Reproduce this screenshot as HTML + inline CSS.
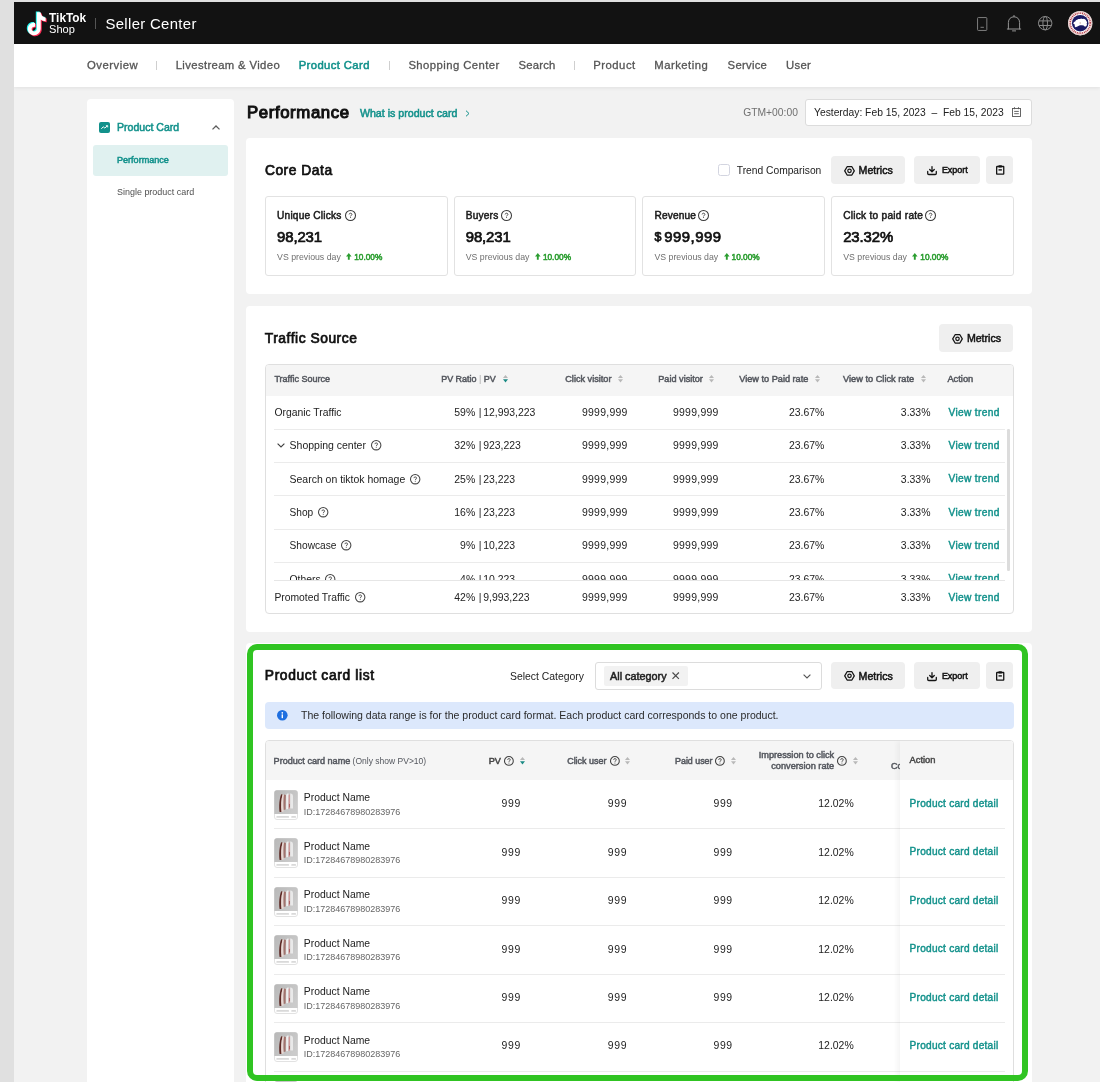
<!DOCTYPE html>
<html lang="en"><head><meta charset="utf-8"><title>TikTok Shop Seller Center - Product Card Performance</title>
<style>
*{box-sizing:border-box;margin:0;padding:0}
html,body{width:1100px;height:1082px;overflow:hidden}
body{background:#e0e0e0;font-family:"Liberation Sans",Arial,sans-serif;color:#1f1f1f;font-size:10.4px;position:relative}
.abs,.t{position:absolute}
.t{white-space:nowrap;line-height:14px;height:14px}
.t2{line-height:20px;height:20px}
.t3{line-height:24px;height:24px}
.b{font-weight:700}
.sb{-webkit-text-stroke:0.5px currentColor}
.sbl{-webkit-text-stroke:0.42px currentColor}
.sb1{-webkit-text-stroke:0.5px currentColor}
.sb2{-webkit-text-stroke:0.72px currentColor}
.sb3{-webkit-text-stroke:1.05px currentColor}
.teal{color:#12918b}
.gray{color:#707070}
svg{position:absolute;overflow:visible}
#app{opacity:0.999;position:absolute;left:14px;top:2px;width:1086px;height:1080px;background:#f2f2f2;overflow:hidden}
header{position:absolute;left:0;top:0;width:1086px;height:42px;background:#121212}
nav{position:absolute;left:0;top:42px;width:1086px;height:43.3px;background:#fff;box-shadow:0 1px 4px rgba(0,0,0,.08)}
nav .t{font-size:12px;color:#555;-webkit-text-stroke:0.3px currentColor}
nav .t.sb{-webkit-text-stroke:0.5px currentColor}
nav .t.teal{color:#12918b}
nav .sep{position:absolute;top:16.5px;width:1px;height:9px;background:#cfcfcf}
aside{position:absolute;left:73px;top:97px;width:147px;height:1000px;background:#fff;border-radius:4px}
.card{position:absolute;left:232.2px;width:785.6px;background:#fff;border-radius:4px}
.btn{position:absolute;background:#efefef;border-radius:4px;height:27.4px}
.stat{position:absolute;border:1px solid #e2e2e2;border-radius:3px;background:#fff}
.tbl{position:absolute;border:1px solid #dfdfdf;border-radius:4px;overflow:hidden;background:#fff}
.thead{position:absolute;left:0;top:0;right:0;background:#f5f5f5}
.thead .t{color:#55585f}
.hl{position:absolute;height:1px;background:#ebebeb}
</style></head>
<body>
<div id="app">
<header>
<svg style="left:11.60px;top:8.80px" width="21.5" height="25.5" viewBox="-1.6 -1.2 20.2 24.4"><path d="M8.6 0 H12.2 C12.5 2.9 14.2 4.7 17 5 V8.6 C15.2 8.6 13.6 8 12.3 7 V15.4 C12.3 19.4 9.3 22 6 22 C2.6 22 0 19.3 0 16 C0 12.4 3.1 9.6 6.9 10.2 V13.9 C5.1 13.4 3.6 14.5 3.6 16.1 C3.6 17.5 4.7 18.5 6 18.5 C7.5 18.5 8.6 17.4 8.6 15.6 Z" fill="#25f4ee" transform="translate(-1,-0.8)"/><path d="M8.6 0 H12.2 C12.5 2.9 14.2 4.7 17 5 V8.6 C15.2 8.6 13.6 8 12.3 7 V15.4 C12.3 19.4 9.3 22 6 22 C2.6 22 0 19.3 0 16 C0 12.4 3.1 9.6 6.9 10.2 V13.9 C5.1 13.4 3.6 14.5 3.6 16.1 C3.6 17.5 4.7 18.5 6 18.5 C7.5 18.5 8.6 17.4 8.6 15.6 Z" fill="#fe2c55" transform="translate(1,0.9)"/><path d="M8.6 0 H12.2 C12.5 2.9 14.2 4.7 17 5 V8.6 C15.2 8.6 13.6 8 12.3 7 V15.4 C12.3 19.4 9.3 22 6 22 C2.6 22 0 19.3 0 16 C0 12.4 3.1 9.6 6.9 10.2 V13.9 C5.1 13.4 3.6 14.5 3.6 16.1 C3.6 17.5 4.7 18.5 6 18.5 C7.5 18.5 8.6 17.4 8.6 15.6 Z" fill="#fff"/></svg>
<span class="t b" style="left:35.10px;top:7.00px;line-height:18px;height:18px;font-size:11.85px;color:#fff">TikTok</span>
<span class="t " style="left:35.10px;top:19.00px;line-height:16px;height:16px;font-size:11.05px;color:#fff">Shop</span>
<div class="abs" style="left:81.00px;top:16.00px;width:1.00px;height:10.50px;background:#555"></div>
<span class="t " style="left:91.50px;top:12.00px;line-height:20px;height:20px;font-size:14.90px;letter-spacing:0.329px;color:#fff">Seller Center</span>
<svg style="left:962.80px;top:14.80px" width="10.4" height="14" viewBox="0 0 10.4 14"><rect x="0.55" y="0.55" width="9.3" height="12.9" rx="0.8" fill="none" stroke="#7d7d7d" stroke-width="1"/><path d="M3.5 10.3 H6.9" stroke="#7d7d7d" stroke-width="1"/></svg>
<svg style="left:992.50px;top:12.50px" width="14" height="17" viewBox="0 0 14 17"><path d="M7 0.4 V1.7 M1.4 14 V7.6 C1.4 3.8 4 1.8 7 1.8 C10 1.8 12.6 3.8 12.6 7.6 V14 M0.3 14 H13.7 M5.5 15.9 H8.6" fill="none" stroke="#939393" stroke-width="1" stroke-linecap="round"/></svg>
<svg style="left:1024.20px;top:13.80px" width="14.4" height="14.4" viewBox="0 0 14.4 14.4"><g fill="none" stroke="#8a8a8a" stroke-width="1"><circle cx="7.2" cy="7.2" r="6.7"/><ellipse cx="7.2" cy="7.2" rx="2.3" ry="6.7"/><path d="M1 4.9 H13.4 M1 9.5 H13.4"/></g></svg>
<svg style="left:1053.90px;top:8.90px" width="24.4" height="24.4" viewBox="0 0 24.4 24.4"><circle cx="12.2" cy="12.2" r="12.2" fill="#fff"/><circle cx="12.2" cy="12.2" r="11.6" fill="none" stroke="#d8a9a6" stroke-width="0.7"/><circle cx="12.2" cy="12.2" r="10" fill="none" stroke="#b8434c" stroke-width="1.7" stroke-dasharray="1.1 0.7"/><circle cx="12.2" cy="12.2" r="8.3" fill="#1a1a63"/><path d="M5.2 12.6 L6 10.9 L7.2 10.6 L7.9 9.2 L9.6 8.6 L10.4 7.9 L12.3 8 L13 7.6 L14.8 8 L16 7.8 L17.6 8.8 L18.4 10 L19.1 11.2 L18.7 12.6 L19 14 L17.9 15.4 L16.6 15.6 L15.6 14.6 L14 14.2 L12 14.3 L10.3 15 L9 15.8 L7.3 16.2 L6.6 15 L6.9 13.8 Z" fill="#fff"/><circle cx="12.2" cy="12" r="0.7" fill="#c9a7a0"/></svg>
</header>
<nav>
<span class="t " style="left:72.90px;top:13.00px;line-height:16px;height:16px;font-size:11.30px;letter-spacing:0.530px;">Overview</span>
<span class="t " style="left:161.70px;top:13.00px;line-height:16px;height:16px;font-size:11.30px;letter-spacing:0.366px;">Livestream &amp; Video</span>
<span class="t sb teal" style="left:284.70px;top:13.00px;line-height:16px;height:16px;font-size:11.30px;letter-spacing:0.384px;">Product Card</span>
<span class="t " style="left:394.40px;top:13.00px;line-height:16px;height:16px;font-size:11.30px;letter-spacing:0.435px;">Shopping Center</span>
<span class="t " style="left:504.40px;top:13.00px;line-height:16px;height:16px;font-size:11.30px;letter-spacing:0.239px;">Search</span>
<span class="t " style="left:579.20px;top:13.00px;line-height:16px;height:16px;font-size:11.30px;letter-spacing:0.509px;">Product</span>
<span class="t " style="left:640.30px;top:13.00px;line-height:16px;height:16px;font-size:11.30px;letter-spacing:0.486px;">Marketing</span>
<span class="t " style="left:713.60px;top:13.00px;line-height:16px;height:16px;font-size:11.30px;letter-spacing:0.270px;">Service</span>
<span class="t " style="left:772.00px;top:13.00px;line-height:16px;height:16px;font-size:11.30px;letter-spacing:0.314px;">User</span>
<div class="abs" style="left:141.80px;top:16.50px;width:1.00px;height:9.50px;background:#cfcfcf"></div>
<div class="abs" style="left:374.70px;top:16.50px;width:1.00px;height:9.50px;background:#cfcfcf"></div>
<div class="abs" style="left:560.00px;top:16.50px;width:1.00px;height:9.50px;background:#cfcfcf"></div>
</nav>
<aside>
<svg style="left:12.30px;top:22.90px" width="11" height="11" viewBox="0 0 11 11"><rect width="11" height="11" rx="2" fill="#12918b"/><path d="M2.3 6.7 L4.3 4.9 L5.8 6 L8.4 3.9" fill="none" stroke="#fff" stroke-width="1"/><path d="M6.9 3.7 H8.7 V5.4" fill="none" stroke="#fff" stroke-width="0.9"/></svg>
<span class="t sb teal" style="left:30.00px;top:20.00px;line-height:16px;height:16px;font-size:10.57px;">Product Card</span>
<svg style="left:125.30px;top:25.80px" width="8" height="5" viewBox="0 0 8 5"><path d="M0.5 4.4 L4 1 L7.5 4.4" fill="none" stroke="#5c5c5c" stroke-width="1.3"/></svg>
<div class="abs" style="left:5.80px;top:45.50px;width:135.30px;height:31.20px;background:#e0f1f0;border-radius:3px"></div>
<span class="t sb1 teal" style="left:30.00px;top:54.00px;line-height:14px;height:14px;font-size:9.07px;">Performance</span>
<span class="t " style="left:30.00px;top:86.00px;line-height:14px;height:14px;font-size:8.96px;color:#505050">Single product card</span>
</aside>
<span class="t sb3" style="left:233.00px;top:99.00px;line-height:23px;height:23px;font-size:16.80px;letter-spacing:0.603px;color:#111">Performance</span>
<span class="t sb teal" style="left:345.90px;top:103.00px;line-height:16px;height:16px;font-size:10.65px;">What is product card</span>
<svg style="left:450.50px;top:107.70px" width="5" height="7" viewBox="0 0 5 7"><path d="M1 0.7 L4 3.5 L1 6.3" fill="none" stroke="#12918b" stroke-width="1"/></svg>
<span class="t gray" style="left:729.20px;top:103.00px;line-height:15px;height:15px;font-size:10.32px;">GTM+00:00</span>
<div class="abs" style="left:790.70px;top:97.30px;width:227.00px;height:26.50px;background:#fff;border:1px solid #dcdcdc;border-radius:3px"><span class="t " style="left:8.30px;top:4.70px;line-height:15px;height:15px;font-size:10.31px;color:#222">Yesterday: Feb 15, 2023&nbsp; –&nbsp; Feb 15, 2023</span><svg style="left:206.40px;top:6.90px" width="9.3" height="10" viewBox="0 0 9.3 10"><g fill="none" stroke="#555" stroke-width="0.9"><rect x="0.5" y="1.5" width="8" height="8"/><path d="M2.5 0.2 V2.2 M6.5 0.2 V2.2 M2.2 4.4 H6.8 M2.2 6.7 H6.8"/></g></svg></div>
<section class="card" style="top:136.4px;height:156.1px">
<span class="t sb2" style="left:18.70px;top:22.60px;line-height:19px;height:19px;font-size:13.80px;letter-spacing:0.538px;color:#111">Core Data</span>
<div class="abs" style="left:472.00px;top:25.60px;width:12.00px;height:11.80px;border:1px solid #d3d5e0;border-radius:2.5px;background:#fff"></div>
<span class="t " style="left:490.60px;top:24.60px;line-height:15px;height:15px;font-size:10.25px;color:#222">Trend Comparison</span>
<div class="btn" style="left:584.70px;top:17.90px;width:74.30px;height:27.40px;"><svg style="left:13.10px;top:9.25px" width="11" height="10" viewBox="0 0 11 10"><path d="M3.1 0.7 L7.9 0.7 L10.3 4.85 L7.9 9 L3.1 9 L0.7 4.85 Z" fill="none" stroke="#141414" stroke-width="1.25" stroke-linejoin="round"/><circle cx="5.5" cy="4.85" r="1.75" fill="none" stroke="#141414" stroke-width="1.2"/></svg><span class="t sb" style="left:27.70px;top:5.70px;line-height:16px;height:16px;font-size:10.61px;color:#141414">Metrics</span></div><div class="btn" style="left:668.00px;top:17.90px;width:65.90px;height:27.40px;"><svg style="left:13.20px;top:9.60px" width="10" height="9.2" viewBox="0 0 10 9.2"><path d="M5 0.6 V5.6 M2.7 3.5 L5 5.8 L7.3 3.5 M0.7 5.4 V7.4 Q0.7 8.5 1.8 8.5 H8.2 Q9.3 8.5 9.3 7.4 V5.4" fill="none" stroke="#141414" stroke-width="1.3" stroke-linecap="round" stroke-linejoin="round"/></svg><span class="t sb" style="left:27.70px;top:6.70px;line-height:14px;height:14px;font-size:8.96px;color:#141414">Export</span></div><div class="btn" style="left:739.90px;top:17.90px;width:27.40px;height:27.40px;"><svg style="left:9.70px;top:8.90px" width="8.4" height="9.8" viewBox="0 0 8.4 9.8"><rect x="0.65" y="1.5" width="7.1" height="7.65" rx="0.3" fill="none" stroke="#141414" stroke-width="1.3"/><rect x="2.4" y="0.2" width="3.6" height="2.2" rx="0.6" fill="#141414"/><path d="M2.5 4.9 H5.9" stroke="#141414" stroke-width="1.4"/></svg></div>
<div class="stat" style="left:18.70px;top:57.70px;width:182.70px;height:79.80px;">
<span class="t sb" style="left:11.20px;top:10.90px;line-height:15px;height:15px;font-size:10.15px;letter-spacing:0.196px;color:#1a1a1a">Unique Clicks</span>
<svg style="left:78.70px;top:12.90px" width="11.0" height="11.0" viewBox="-5.5 -5.5 11.0 11.0"><circle cx="0" cy="0" r="5.0" fill="none" stroke="#3c3c3c" stroke-width="1.05"/><path d="M-1.3 -1.1 C-1.3 -2.7 1.4 -2.7 1.4 -1.1 C1.4 -0.1 0.05 -0.2 0.05 0.9" fill="none" stroke="#3c3c3c" stroke-width="0.9"/><circle cx="0.05" cy="2.1" r="0.5" fill="#3c3c3c"/></svg>
<span class="t sb2" style="left:11.20px;top:29.90px;line-height:20px;height:20px;font-size:14.90px;letter-spacing:-0.115px;color:#111">98,231</span>
<span class="t gray" style="left:11.20px;top:52.90px;line-height:14px;height:14px;font-size:8.76px;">VS previous day</span>
<svg style="left:80.50px;top:56.30px" width="5.6" height="6.8" viewBox="0 0 5.6 6.8"><path d="M2.8 0 L5.6 3.6 H3.75 V6.8 H1.85 V3.6 H0 Z" fill="#2a9d2f"/></svg>
<span class="t sb1" style="left:88.30px;top:52.90px;line-height:14px;height:14px;font-size:8.31px;color:#2a9d2f">10.00%</span>
</div>
<div class="stat" style="left:207.40px;top:57.70px;width:182.70px;height:79.80px;">
<span class="t sb" style="left:11.20px;top:10.90px;line-height:15px;height:15px;font-size:10.15px;letter-spacing:0.182px;color:#1a1a1a">Buyers</span>
<svg style="left:46.40px;top:12.90px" width="11.0" height="11.0" viewBox="-5.5 -5.5 11.0 11.0"><circle cx="0" cy="0" r="5.0" fill="none" stroke="#3c3c3c" stroke-width="1.05"/><path d="M-1.3 -1.1 C-1.3 -2.7 1.4 -2.7 1.4 -1.1 C1.4 -0.1 0.05 -0.2 0.05 0.9" fill="none" stroke="#3c3c3c" stroke-width="0.9"/><circle cx="0.05" cy="2.1" r="0.5" fill="#3c3c3c"/></svg>
<span class="t sb2" style="left:11.20px;top:29.90px;line-height:20px;height:20px;font-size:14.90px;letter-spacing:-0.115px;color:#111">98,231</span>
<span class="t gray" style="left:11.20px;top:52.90px;line-height:14px;height:14px;font-size:8.76px;">VS previous day</span>
<svg style="left:80.50px;top:56.30px" width="5.6" height="6.8" viewBox="0 0 5.6 6.8"><path d="M2.8 0 L5.6 3.6 H3.75 V6.8 H1.85 V3.6 H0 Z" fill="#2a9d2f"/></svg>
<span class="t sb1" style="left:88.30px;top:52.90px;line-height:14px;height:14px;font-size:8.31px;color:#2a9d2f">10.00%</span>
</div>
<div class="stat" style="left:396.10px;top:57.70px;width:182.70px;height:79.80px;">
<span class="t sb" style="left:11.20px;top:10.90px;line-height:15px;height:15px;font-size:10.15px;letter-spacing:0.145px;color:#1a1a1a">Revenue</span>
<svg style="left:55.20px;top:12.90px" width="11.0" height="11.0" viewBox="-5.5 -5.5 11.0 11.0"><circle cx="0" cy="0" r="5.0" fill="none" stroke="#3c3c3c" stroke-width="1.05"/><path d="M-1.3 -1.1 C-1.3 -2.7 1.4 -2.7 1.4 -1.1 C1.4 -0.1 0.05 -0.2 0.05 0.9" fill="none" stroke="#3c3c3c" stroke-width="0.9"/><circle cx="0.05" cy="2.1" r="0.5" fill="#3c3c3c"/></svg>
<span class="t sb2" style="left:11.20px;top:30.90px;line-height:18px;height:18px;font-size:12.50px;color:#111">$</span>
<span class="t sb2" style="left:20.90px;top:29.90px;line-height:20px;height:20px;font-size:14.90px;letter-spacing:0.523px;color:#111">999,999</span>
<span class="t gray" style="left:11.20px;top:52.90px;line-height:14px;height:14px;font-size:8.76px;">VS previous day</span>
<svg style="left:80.50px;top:56.30px" width="5.6" height="6.8" viewBox="0 0 5.6 6.8"><path d="M2.8 0 L5.6 3.6 H3.75 V6.8 H1.85 V3.6 H0 Z" fill="#2a9d2f"/></svg>
<span class="t sb1" style="left:88.30px;top:52.90px;line-height:14px;height:14px;font-size:8.31px;color:#2a9d2f">10.00%</span>
</div>
<div class="stat" style="left:584.80px;top:57.70px;width:182.70px;height:79.80px;">
<span class="t sb" style="left:11.20px;top:10.90px;line-height:15px;height:15px;font-size:10.15px;letter-spacing:0.259px;color:#1a1a1a">Click to paid rate</span>
<svg style="left:93.00px;top:12.90px" width="11.0" height="11.0" viewBox="-5.5 -5.5 11.0 11.0"><circle cx="0" cy="0" r="5.0" fill="none" stroke="#3c3c3c" stroke-width="1.05"/><path d="M-1.3 -1.1 C-1.3 -2.7 1.4 -2.7 1.4 -1.1 C1.4 -0.1 0.05 -0.2 0.05 0.9" fill="none" stroke="#3c3c3c" stroke-width="0.9"/><circle cx="0.05" cy="2.1" r="0.5" fill="#3c3c3c"/></svg>
<span class="t sb2" style="left:11.20px;top:29.90px;line-height:20px;height:20px;font-size:14.90px;letter-spacing:-0.107px;color:#111">23.32%</span>
<span class="t gray" style="left:11.20px;top:52.90px;line-height:14px;height:14px;font-size:8.76px;">VS previous day</span>
<svg style="left:80.50px;top:56.30px" width="5.6" height="6.8" viewBox="0 0 5.6 6.8"><path d="M2.8 0 L5.6 3.6 H3.75 V6.8 H1.85 V3.6 H0 Z" fill="#2a9d2f"/></svg>
<span class="t sb1" style="left:88.30px;top:52.90px;line-height:14px;height:14px;font-size:8.31px;color:#2a9d2f">10.00%</span>
</div>
</section>
<section class="card" style="top:304px;height:325.8px">
<span class="t sb2" style="left:18.60px;top:23.00px;line-height:19px;height:19px;font-size:13.80px;letter-spacing:0.536px;color:#111">Traffic Source</span>
<div class="btn" style="left:693.00px;top:18.40px;width:74.30px;height:27.40px;"><svg style="left:13.10px;top:9.25px" width="11" height="10" viewBox="0 0 11 10"><path d="M3.1 0.7 L7.9 0.7 L10.3 4.85 L7.9 9 L3.1 9 L0.7 4.85 Z" fill="none" stroke="#141414" stroke-width="1.25" stroke-linejoin="round"/><circle cx="5.5" cy="4.85" r="1.75" fill="none" stroke="#141414" stroke-width="1.2"/></svg><span class="t sb" style="left:27.70px;top:5.60px;line-height:16px;height:16px;font-size:10.61px;color:#141414">Metrics</span></div>
<div class="tbl" style="left:18.60px;top:58.10px;width:749.40px;height:249.90px;">
<div class="thead" style="left:0.00px;top:0.00px;width:747.40px;height:30.60px;">
<span class="t sb1" style="left:8.60px;top:6.90px;line-height:14px;height:14px;font-size:9.03px;">Traffic Source</span>
<span class="t sb1" style="left:175.40px;top:6.90px;line-height:14px;height:14px;font-size:8.96px;">PV Ratio <span style="color:#aaa;-webkit-text-stroke:0">|</span> PV</span>
<svg style="left:237.20px;top:10.40px" width="5" height="7.4" viewBox="0 0 5 7.4"><path d="M2.5 0 L5 3.1 L0 3.1 Z" fill="#b8b8b8"/><path d="M2.5 7.4 L5 4.3 L0 4.3 Z" fill="#1a8a84"/></svg>
<span class="t sb1" style="left:299.50px;top:6.90px;line-height:14px;height:14px;font-size:9.14px;">Click visitor</span>
<svg style="left:352.70px;top:10.40px" width="5" height="7.4" viewBox="0 0 5 7.4"><path d="M2.5 0 L5 3.1 L0 3.1 Z" fill="#b8b8b8"/><path d="M2.5 7.4 L5 4.3 L0 4.3 Z" fill="#b8b8b8"/></svg>
<span class="t sb1" style="left:392.50px;top:6.90px;line-height:14px;height:14px;font-size:9.14px;">Paid visitor</span>
<svg style="left:443.50px;top:10.40px" width="5" height="7.4" viewBox="0 0 5 7.4"><path d="M2.5 0 L5 3.1 L0 3.1 Z" fill="#b8b8b8"/><path d="M2.5 7.4 L5 4.3 L0 4.3 Z" fill="#b8b8b8"/></svg>
<span class="t sb1" style="left:473.50px;top:6.90px;line-height:14px;height:14px;font-size:9.16px;">View to Paid rate</span>
<svg style="left:549.70px;top:10.40px" width="5" height="7.4" viewBox="0 0 5 7.4"><path d="M2.5 0 L5 3.1 L0 3.1 Z" fill="#b8b8b8"/><path d="M2.5 7.4 L5 4.3 L0 4.3 Z" fill="#b8b8b8"/></svg>
<span class="t sb1" style="left:577.30px;top:6.90px;line-height:14px;height:14px;font-size:9.23px;">View to Click rate</span>
<svg style="left:655.40px;top:10.40px" width="5" height="7.4" viewBox="0 0 5 7.4"><path d="M2.5 0 L5 3.1 L0 3.1 Z" fill="#b8b8b8"/><path d="M2.5 7.4 L5 4.3 L0 4.3 Z" fill="#b8b8b8"/></svg>
<span class="t sb1" style="left:681.60px;top:6.90px;line-height:14px;height:14px;font-size:9.32px;">Action</span>
</div>
<div class="abs" style="left:0.00px;top:30.60px;width:747.40px;height:184.90px;overflow:hidden">
<span class="t " style="left:8.60px;top:9.30px;line-height:15px;height:15px;font-size:10.36px;color:#222">Organic Traffic</span><span class="t " style="left:-90.60px;width:300px;text-align:right;top:9.30px;line-height:15px;height:15px;font-size:10.45px;color:#222">59%</span><span class="t " style="left:212.90px;top:9.30px;line-height:15px;height:15px;font-size:10.45px;color:#222">|</span><span class="t " style="left:217.40px;top:9.30px;line-height:15px;height:15px;font-size:10.45px;color:#222">12,993,223</span><span class="t " style="left:61.87px;width:300px;text-align:right;top:9.30px;line-height:15px;height:15px;font-size:10.45px;letter-spacing:0.273px;color:#222">9999,999</span><span class="t " style="left:152.87px;width:300px;text-align:right;top:9.30px;line-height:15px;height:15px;font-size:10.45px;letter-spacing:0.273px;color:#222">9999,999</span><span class="t " style="left:258.60px;width:300px;text-align:right;top:9.30px;line-height:15px;height:15px;font-size:10.45px;color:#222">23.67%</span><span class="t " style="left:364.70px;width:300px;text-align:right;top:9.30px;line-height:15px;height:15px;font-size:10.45px;color:#222">3.33%</span><span class="t sbl teal" style="left:682.70px;top:9.30px;line-height:15px;height:15px;font-size:10.20px;letter-spacing:0.333px;">View trend</span>
<div class="hl" style="left:7.80px;top:32.83px;width:731.00px;height:1.00px;"></div>
<svg style="left:11.20px;top:47.63px" width="8" height="5" viewBox="0 0 8 5"><path d="M0.6 0.7 L4 4 L7.4 0.7" fill="none" stroke="#444" stroke-width="1.15"/></svg><span class="t " style="left:23.80px;top:42.30px;line-height:15px;height:15px;font-size:10.49px;color:#222">Shopping center</span><svg style="left:105.10px;top:44.73px" width="10.4" height="10.4" viewBox="-5.2 -5.2 10.4 10.4"><circle cx="0" cy="0" r="4.7" fill="none" stroke="#444" stroke-width="1.05"/><path d="M-1.3 -1.1 C-1.3 -2.7 1.4 -2.7 1.4 -1.1 C1.4 -0.1 0.05 -0.2 0.05 0.9" fill="none" stroke="#444" stroke-width="0.9"/><circle cx="0.05" cy="2.1" r="0.5" fill="#444"/></svg><span class="t " style="left:-90.60px;width:300px;text-align:right;top:42.30px;line-height:15px;height:15px;font-size:10.45px;color:#222">32%</span><span class="t " style="left:212.90px;top:42.30px;line-height:15px;height:15px;font-size:10.45px;color:#222">|</span><span class="t " style="left:217.40px;top:42.30px;line-height:15px;height:15px;font-size:10.45px;color:#222">923,223</span><span class="t " style="left:61.87px;width:300px;text-align:right;top:42.30px;line-height:15px;height:15px;font-size:10.45px;letter-spacing:0.273px;color:#222">9999,999</span><span class="t " style="left:152.87px;width:300px;text-align:right;top:42.30px;line-height:15px;height:15px;font-size:10.45px;letter-spacing:0.273px;color:#222">9999,999</span><span class="t " style="left:258.60px;width:300px;text-align:right;top:42.30px;line-height:15px;height:15px;font-size:10.45px;color:#222">23.67%</span><span class="t " style="left:364.70px;width:300px;text-align:right;top:42.30px;line-height:15px;height:15px;font-size:10.45px;color:#222">3.33%</span><span class="t sbl teal" style="left:682.70px;top:42.30px;line-height:15px;height:15px;font-size:10.20px;letter-spacing:0.333px;">View trend</span>
<div class="hl" style="left:7.80px;top:66.16px;width:731.00px;height:1.00px;"></div>
<span class="t " style="left:23.80px;top:76.30px;line-height:15px;height:15px;font-size:10.46px;color:#222">Search on tiktok homage</span><svg style="left:144.00px;top:78.06px" width="10.4" height="10.4" viewBox="-5.2 -5.2 10.4 10.4"><circle cx="0" cy="0" r="4.7" fill="none" stroke="#444" stroke-width="1.05"/><path d="M-1.3 -1.1 C-1.3 -2.7 1.4 -2.7 1.4 -1.1 C1.4 -0.1 0.05 -0.2 0.05 0.9" fill="none" stroke="#444" stroke-width="0.9"/><circle cx="0.05" cy="2.1" r="0.5" fill="#444"/></svg><span class="t " style="left:-90.60px;width:300px;text-align:right;top:76.30px;line-height:15px;height:15px;font-size:10.45px;color:#222">25%</span><span class="t " style="left:212.90px;top:76.30px;line-height:15px;height:15px;font-size:10.45px;color:#222">|</span><span class="t " style="left:217.40px;top:76.30px;line-height:15px;height:15px;font-size:10.45px;color:#222">23,223</span><span class="t " style="left:61.87px;width:300px;text-align:right;top:76.30px;line-height:15px;height:15px;font-size:10.45px;letter-spacing:0.273px;color:#222">9999,999</span><span class="t " style="left:152.87px;width:300px;text-align:right;top:76.30px;line-height:15px;height:15px;font-size:10.45px;letter-spacing:0.273px;color:#222">9999,999</span><span class="t " style="left:258.60px;width:300px;text-align:right;top:76.30px;line-height:15px;height:15px;font-size:10.45px;color:#222">23.67%</span><span class="t " style="left:364.70px;width:300px;text-align:right;top:76.30px;line-height:15px;height:15px;font-size:10.45px;color:#222">3.33%</span><span class="t sbl teal" style="left:682.70px;top:75.30px;line-height:15px;height:15px;font-size:10.20px;letter-spacing:0.333px;">View trend</span>
<div class="hl" style="left:7.80px;top:99.49px;width:731.00px;height:1.00px;"></div>
<span class="t " style="left:23.80px;top:109.30px;line-height:15px;height:15px;font-size:10.15px;color:#222">Shop</span><svg style="left:52.00px;top:111.39px" width="10.4" height="10.4" viewBox="-5.2 -5.2 10.4 10.4"><circle cx="0" cy="0" r="4.7" fill="none" stroke="#444" stroke-width="1.05"/><path d="M-1.3 -1.1 C-1.3 -2.7 1.4 -2.7 1.4 -1.1 C1.4 -0.1 0.05 -0.2 0.05 0.9" fill="none" stroke="#444" stroke-width="0.9"/><circle cx="0.05" cy="2.1" r="0.5" fill="#444"/></svg><span class="t " style="left:-90.60px;width:300px;text-align:right;top:109.30px;line-height:15px;height:15px;font-size:10.45px;color:#222">16%</span><span class="t " style="left:212.90px;top:109.30px;line-height:15px;height:15px;font-size:10.45px;color:#222">|</span><span class="t " style="left:217.40px;top:109.30px;line-height:15px;height:15px;font-size:10.45px;color:#222">23,223</span><span class="t " style="left:61.87px;width:300px;text-align:right;top:109.30px;line-height:15px;height:15px;font-size:10.45px;letter-spacing:0.273px;color:#222">9999,999</span><span class="t " style="left:152.87px;width:300px;text-align:right;top:109.30px;line-height:15px;height:15px;font-size:10.45px;letter-spacing:0.273px;color:#222">9999,999</span><span class="t " style="left:258.60px;width:300px;text-align:right;top:109.30px;line-height:15px;height:15px;font-size:10.45px;color:#222">23.67%</span><span class="t " style="left:364.70px;width:300px;text-align:right;top:109.30px;line-height:15px;height:15px;font-size:10.45px;color:#222">3.33%</span><span class="t sbl teal" style="left:682.70px;top:109.30px;line-height:15px;height:15px;font-size:10.20px;letter-spacing:0.333px;">View trend</span>
<div class="hl" style="left:7.80px;top:132.82px;width:731.00px;height:1.00px;"></div>
<span class="t " style="left:23.80px;top:142.30px;line-height:15px;height:15px;font-size:10.19px;color:#222">Showcase</span><svg style="left:75.30px;top:144.72px" width="10.4" height="10.4" viewBox="-5.2 -5.2 10.4 10.4"><circle cx="0" cy="0" r="4.7" fill="none" stroke="#444" stroke-width="1.05"/><path d="M-1.3 -1.1 C-1.3 -2.7 1.4 -2.7 1.4 -1.1 C1.4 -0.1 0.05 -0.2 0.05 0.9" fill="none" stroke="#444" stroke-width="0.9"/><circle cx="0.05" cy="2.1" r="0.5" fill="#444"/></svg><span class="t " style="left:-90.60px;width:300px;text-align:right;top:142.30px;line-height:15px;height:15px;font-size:10.45px;color:#222">9%</span><span class="t " style="left:212.90px;top:142.30px;line-height:15px;height:15px;font-size:10.45px;color:#222">|</span><span class="t " style="left:217.40px;top:142.30px;line-height:15px;height:15px;font-size:10.45px;color:#222">10,223</span><span class="t " style="left:61.87px;width:300px;text-align:right;top:142.30px;line-height:15px;height:15px;font-size:10.45px;letter-spacing:0.273px;color:#222">9999,999</span><span class="t " style="left:152.87px;width:300px;text-align:right;top:142.30px;line-height:15px;height:15px;font-size:10.45px;letter-spacing:0.273px;color:#222">9999,999</span><span class="t " style="left:258.60px;width:300px;text-align:right;top:142.30px;line-height:15px;height:15px;font-size:10.45px;color:#222">23.67%</span><span class="t " style="left:364.70px;width:300px;text-align:right;top:142.30px;line-height:15px;height:15px;font-size:10.45px;color:#222">3.33%</span><span class="t sbl teal" style="left:682.70px;top:142.30px;line-height:15px;height:15px;font-size:10.20px;letter-spacing:0.333px;">View trend</span>
<div class="hl" style="left:7.80px;top:166.15px;width:731.00px;height:1.00px;"></div>
<span class="t " style="left:23.80px;top:176.30px;line-height:15px;height:15px;font-size:10.33px;color:#222">Others</span><svg style="left:59.10px;top:178.05px" width="10.4" height="10.4" viewBox="-5.2 -5.2 10.4 10.4"><circle cx="0" cy="0" r="4.7" fill="none" stroke="#444" stroke-width="1.05"/><path d="M-1.3 -1.1 C-1.3 -2.7 1.4 -2.7 1.4 -1.1 C1.4 -0.1 0.05 -0.2 0.05 0.9" fill="none" stroke="#444" stroke-width="0.9"/><circle cx="0.05" cy="2.1" r="0.5" fill="#444"/></svg><span class="t " style="left:-90.60px;width:300px;text-align:right;top:176.30px;line-height:15px;height:15px;font-size:10.45px;color:#222">4%</span><span class="t " style="left:212.90px;top:176.30px;line-height:15px;height:15px;font-size:10.45px;color:#222">|</span><span class="t " style="left:217.40px;top:176.30px;line-height:15px;height:15px;font-size:10.45px;color:#222">10,223</span><span class="t " style="left:61.87px;width:300px;text-align:right;top:176.30px;line-height:15px;height:15px;font-size:10.45px;letter-spacing:0.273px;color:#222">9999,999</span><span class="t " style="left:152.87px;width:300px;text-align:right;top:176.30px;line-height:15px;height:15px;font-size:10.45px;letter-spacing:0.273px;color:#222">9999,999</span><span class="t " style="left:258.60px;width:300px;text-align:right;top:176.30px;line-height:15px;height:15px;font-size:10.45px;color:#222">23.67%</span><span class="t " style="left:364.70px;width:300px;text-align:right;top:176.30px;line-height:15px;height:15px;font-size:10.45px;color:#222">3.33%</span><span class="t sbl teal" style="left:682.70px;top:175.30px;line-height:15px;height:15px;font-size:10.20px;letter-spacing:0.333px;">View trend</span>
<div class="hl" style="left:7.80px;top:199.48px;width:731.00px;height:1.00px;"></div>
<div class="abs" style="left:741.40px;top:33.30px;width:2.60px;height:142.00px;background:#dcdcdc;border-radius:1.3px"></div>
</div>
<div class="hl" style="left:7.80px;top:215.10px;width:731.00px;height:1.00px;background:#e6e6e6"></div>
<span class="t " style="left:8.60px;top:224.90px;line-height:15px;height:15px;font-size:10.33px;color:#222">Promoted Traffic</span><svg style="left:89.30px;top:226.70px" width="10.4" height="10.4" viewBox="-5.2 -5.2 10.4 10.4"><circle cx="0" cy="0" r="4.7" fill="none" stroke="#444" stroke-width="1.05"/><path d="M-1.3 -1.1 C-1.3 -2.7 1.4 -2.7 1.4 -1.1 C1.4 -0.1 0.05 -0.2 0.05 0.9" fill="none" stroke="#444" stroke-width="0.9"/><circle cx="0.05" cy="2.1" r="0.5" fill="#444"/></svg><span class="t " style="left:-90.60px;width:300px;text-align:right;top:224.90px;line-height:15px;height:15px;font-size:10.45px;color:#222">42%</span><span class="t " style="left:212.90px;top:224.90px;line-height:15px;height:15px;font-size:10.45px;color:#222">|</span><span class="t " style="left:217.40px;top:224.90px;line-height:15px;height:15px;font-size:10.45px;color:#222">9,993,223</span><span class="t " style="left:61.87px;width:300px;text-align:right;top:224.90px;line-height:15px;height:15px;font-size:10.45px;letter-spacing:0.273px;color:#222">9999,999</span><span class="t " style="left:152.87px;width:300px;text-align:right;top:224.90px;line-height:15px;height:15px;font-size:10.45px;letter-spacing:0.273px;color:#222">9999,999</span><span class="t " style="left:258.60px;width:300px;text-align:right;top:224.90px;line-height:15px;height:15px;font-size:10.45px;color:#222">23.67%</span><span class="t " style="left:364.70px;width:300px;text-align:right;top:224.90px;line-height:15px;height:15px;font-size:10.45px;color:#222">3.33%</span><span class="t sbl teal" style="left:682.70px;top:224.90px;line-height:15px;height:15px;font-size:10.20px;letter-spacing:0.333px;">View trend</span>
</div>
</section>
<section class="card" style="top:641.3px;height:460px">
<span class="t sb2" style="left:18.60px;top:22.70px;line-height:19px;height:19px;font-size:13.80px;letter-spacing:0.648px;color:#111">Product card list</span>
<span class="t " style="left:263.80px;top:25.70px;line-height:15px;height:15px;font-size:10.40px;color:#222">Select Category</span>
<div class="abs" style="left:348.80px;top:18.70px;width:226.80px;height:27.60px;border:1px solid #dcdcdc;border-radius:3px;background:#fff"><div class="abs" style="left:7.90px;top:3.00px;width:83.80px;height:20.20px;background:#f2f2f2;border-radius:2px"></div><span class="t sb" style="left:14.00px;top:5.00px;line-height:16px;height:16px;font-size:10.85px;color:#222">All category</span><svg style="left:76.10px;top:9.30px" width="7.4" height="7.4" viewBox="0 0 7.4 7.4"><path d="M0.5 0.5 L6.9 6.9 M6.9 0.5 L0.5 6.9" stroke="#4a4a4a" stroke-width="1.15"/></svg><svg style="left:206.90px;top:10.90px" width="8" height="5" viewBox="0 0 8 5"><path d="M0.6 0.7 L4 4 L7.4 0.7" fill="none" stroke="#555" stroke-width="1.15"/></svg></div>
<div class="btn" style="left:584.70px;top:18.80px;width:74.30px;height:27.40px;"><svg style="left:13.10px;top:9.25px" width="11" height="10" viewBox="0 0 11 10"><path d="M3.1 0.7 L7.9 0.7 L10.3 4.85 L7.9 9 L3.1 9 L0.7 4.85 Z" fill="none" stroke="#141414" stroke-width="1.25" stroke-linejoin="round"/><circle cx="5.5" cy="4.85" r="1.75" fill="none" stroke="#141414" stroke-width="1.2"/></svg><span class="t sb" style="left:27.70px;top:5.90px;line-height:16px;height:16px;font-size:10.61px;color:#141414">Metrics</span></div><div class="btn" style="left:668.00px;top:18.80px;width:65.90px;height:27.40px;"><svg style="left:13.20px;top:9.60px" width="10" height="9.2" viewBox="0 0 10 9.2"><path d="M5 0.6 V5.6 M2.7 3.5 L5 5.8 L7.3 3.5 M0.7 5.4 V7.4 Q0.7 8.5 1.8 8.5 H8.2 Q9.3 8.5 9.3 7.4 V5.4" fill="none" stroke="#141414" stroke-width="1.3" stroke-linecap="round" stroke-linejoin="round"/></svg><span class="t sb" style="left:27.70px;top:6.90px;line-height:14px;height:14px;font-size:8.96px;color:#141414">Export</span></div><div class="btn" style="left:739.90px;top:18.80px;width:27.40px;height:27.40px;"><svg style="left:9.70px;top:8.90px" width="8.4" height="9.8" viewBox="0 0 8.4 9.8"><rect x="0.65" y="1.5" width="7.1" height="7.65" rx="0.3" fill="none" stroke="#141414" stroke-width="1.3"/><rect x="2.4" y="0.2" width="3.6" height="2.2" rx="0.6" fill="#141414"/><path d="M2.5 4.9 H5.9" stroke="#141414" stroke-width="1.4"/></svg></div>
<div class="abs" style="left:18.60px;top:58.60px;width:749.00px;height:26.70px;background:#dce8fc;border-radius:4px"><svg style="left:12.30px;top:8.30px" width="10.6" height="10.6" viewBox="0 0 10 10"><circle cx="5" cy="5" r="5" fill="#1e6fe0"/><rect x="4.35" y="4.1" width="1.3" height="3.6" fill="#fff"/><circle cx="5" cy="2.7" r="0.8" fill="#fff"/></svg><span class="t " style="left:36.20px;top:5.10px;line-height:16px;height:16px;font-size:10.52px;color:#2a2a2a">The following data range is for the product card format. Each product card corresponds to one product.</span></div>
<div class="tbl" style="left:18.60px;top:97.10px;width:749.40px;height:400.00px;border-radius:4px 4px 0 0">
<div class="thead" style="left:0.00px;top:0.00px;width:747.40px;height:39.00px;">
<span class="t sb1" style="left:7.80px;top:12.60px;line-height:14px;height:14px;font-size:9.08px;">Product card name</span>
<span class="t " style="left:86.80px;top:12.60px;line-height:14px;height:14px;font-size:8.53px;">(Only show PV&gt;10)</span>
<span class="t sb1" style="left:222.90px;top:12.60px;line-height:14px;height:14px;font-size:9.10px;color:#444">PV</span>
<svg style="left:237.90px;top:14.70px" width="9.8" height="9.8" viewBox="-4.9 -4.9 9.8 9.8"><circle cx="0" cy="0" r="4.4" fill="none" stroke="#444" stroke-width="1.05"/><path d="M-1.3 -1.1 C-1.3 -2.7 1.4 -2.7 1.4 -1.1 C1.4 -0.1 0.05 -0.2 0.05 0.9" fill="none" stroke="#444" stroke-width="0.9"/><circle cx="0.05" cy="2.1" r="0.5" fill="#444"/></svg>
<svg style="left:253.80px;top:15.90px" width="5" height="7.4" viewBox="0 0 5 7.4"><path d="M2.5 0 L5 3.1 L0 3.1 Z" fill="#b8b8b8"/><path d="M2.5 7.4 L5 4.3 L0 4.3 Z" fill="#1a8a84"/></svg>
<span class="t sb1" style="left:301.40px;top:12.60px;line-height:14px;height:14px;font-size:8.95px;">Click user</span>
<svg style="left:344.70px;top:14.70px" width="9.8" height="9.8" viewBox="-4.9 -4.9 9.8 9.8"><circle cx="0" cy="0" r="4.4" fill="none" stroke="#444" stroke-width="1.05"/><path d="M-1.3 -1.1 C-1.3 -2.7 1.4 -2.7 1.4 -1.1 C1.4 -0.1 0.05 -0.2 0.05 0.9" fill="none" stroke="#444" stroke-width="0.9"/><circle cx="0.05" cy="2.1" r="0.5" fill="#444"/></svg>
<svg style="left:359.70px;top:15.90px" width="5" height="7.4" viewBox="0 0 5 7.4"><path d="M2.5 0 L5 3.1 L0 3.1 Z" fill="#b8b8b8"/><path d="M2.5 7.4 L5 4.3 L0 4.3 Z" fill="#b8b8b8"/></svg>
<span class="t sb1" style="left:409.30px;top:12.60px;line-height:14px;height:14px;font-size:8.85px;">Paid user</span>
<svg style="left:449.50px;top:14.70px" width="9.8" height="9.8" viewBox="-4.9 -4.9 9.8 9.8"><circle cx="0" cy="0" r="4.4" fill="none" stroke="#444" stroke-width="1.05"/><path d="M-1.3 -1.1 C-1.3 -2.7 1.4 -2.7 1.4 -1.1 C1.4 -0.1 0.05 -0.2 0.05 0.9" fill="none" stroke="#444" stroke-width="0.9"/><circle cx="0.05" cy="2.1" r="0.5" fill="#444"/></svg>
<svg style="left:465.50px;top:15.90px" width="5" height="7.4" viewBox="0 0 5 7.4"><path d="M2.5 0 L5 3.1 L0 3.1 Z" fill="#b8b8b8"/><path d="M2.5 7.4 L5 4.3 L0 4.3 Z" fill="#b8b8b8"/></svg>
<span class="t sb1" style="left:268.40px;width:300px;text-align:right;top:6.60px;line-height:14px;height:14px;font-size:9.19px;">Impression to click</span>
<span class="t sb1" style="left:268.40px;width:300px;text-align:right;top:17.60px;line-height:14px;height:14px;font-size:9.21px;">conversion rate</span>
<svg style="left:571.30px;top:14.70px" width="9.8" height="9.8" viewBox="-4.9 -4.9 9.8 9.8"><circle cx="0" cy="0" r="4.4" fill="none" stroke="#444" stroke-width="1.05"/><path d="M-1.3 -1.1 C-1.3 -2.7 1.4 -2.7 1.4 -1.1 C1.4 -0.1 0.05 -0.2 0.05 0.9" fill="none" stroke="#444" stroke-width="0.9"/><circle cx="0.05" cy="2.1" r="0.5" fill="#444"/></svg>
<svg style="left:587.20px;top:15.90px" width="5" height="7.4" viewBox="0 0 5 7.4"><path d="M2.5 0 L5 3.1 L0 3.1 Z" fill="#b8b8b8"/><path d="M2.5 7.4 L5 4.3 L0 4.3 Z" fill="#b8b8b8"/></svg>
<span class="t sb1" style="left:625.10px;top:17.60px;line-height:14px;height:14px;font-size:9.10px;">Co</span>
</div>
<svg style="left:8.00px;top:48.30px" width="24" height="30" viewBox="0 0 24 30"><defs><linearGradient id="tg" x1="0" y1="0" x2="1" y2="0.6"><stop offset="0" stop-color="#b8b8b8"/><stop offset="1" stop-color="#cbcbcb"/></linearGradient><filter id="tb" x="-20%" y="-20%" width="140%" height="140%"><feGaussianBlur stdDeviation="0.45"/></filter></defs><rect x="0.5" y="0.5" width="23" height="29" rx="2.5" fill="#fff" stroke="#e2e2e2"/><path d="M0.3 3 Q0.3 0.3 3 0.3 H21 Q23.7 0.3 23.7 3 V24 H0.3 Z" fill="url(#tg)"/><g filter="url(#tb)"><path d="M7.3 4.3 C5.3 8 4.8 17 5.6 22 L7.6 22 C6.9 16 7.2 9 8.6 4.6 Z" fill="#5e2a25"/><path d="M8.6 4.6 C7.2 9 6.9 16 7.6 22 L9.6 21.4 C9.1 16 9.3 9 10 4.8 Z" fill="#ead8d3"/><path d="M10 4.6 C9.4 9 9.3 15 9.8 20 L11.6 19.4 C11.5 14 11.7 9 11.9 5 Z" fill="#a3736d"/><path d="M12.2 5 C12.5 4 13.6 3.4 14.6 3.6 L14.4 19 L12.2 19.3 Z" fill="#efefef"/><path d="M14.6 4.8 L16.2 4.4 L16.2 18.6 L14.4 19 Z" fill="#cf9a9a"/><path d="M15 14 L15.9 14 L15.9 17.2 L15 17.2 Z" fill="#a85a5a"/><path d="M16.2 3.6 C17.6 3.4 18.7 4.4 19 5.6 L19 18.4 L16.2 18.6 Z" fill="#e9e9e9"/></g><rect x="2.3" y="26" width="12.8" height="1.8" rx="0.9" fill="#d9d9d9"/><rect x="17.2" y="26" width="4.9" height="1.8" rx="0.9" fill="#d9d9d9"/></svg>
<span class="t " style="left:38.00px;top:48.60px;line-height:15px;height:15px;font-size:10.39px;color:#222">Product Name</span>
<span class="t " style="left:38.00px;top:63.60px;line-height:14px;height:14px;font-size:9.00px;color:#666">ID:17284678980283976</span>
<span class="t " style="left:-44.72px;width:300px;text-align:right;top:54.60px;line-height:15px;height:15px;font-size:10.45px;letter-spacing:0.682px;color:#222">999</span>
<span class="t " style="left:61.38px;width:300px;text-align:right;top:54.60px;line-height:15px;height:15px;font-size:10.45px;letter-spacing:0.682px;color:#222">999</span>
<span class="t " style="left:167.08px;width:300px;text-align:right;top:54.60px;line-height:15px;height:15px;font-size:10.45px;letter-spacing:0.682px;color:#222">999</span>
<span class="t " style="left:287.90px;width:300px;text-align:right;top:54.60px;line-height:15px;height:15px;font-size:10.45px;color:#222">12.02%</span>
<div class="hl" style="left:7.80px;top:86.97px;width:731.00px;height:1.00px;"></div>
<svg style="left:8.00px;top:96.77px" width="24" height="30" viewBox="0 0 24 30"><rect x="0.5" y="0.5" width="23" height="29" rx="2.5" fill="#fff" stroke="#e2e2e2"/><path d="M0.3 3 Q0.3 0.3 3 0.3 H21 Q23.7 0.3 23.7 3 V24 H0.3 Z" fill="url(#tg)"/><g filter="url(#tb)"><path d="M7.3 4.3 C5.3 8 4.8 17 5.6 22 L7.6 22 C6.9 16 7.2 9 8.6 4.6 Z" fill="#5e2a25"/><path d="M8.6 4.6 C7.2 9 6.9 16 7.6 22 L9.6 21.4 C9.1 16 9.3 9 10 4.8 Z" fill="#ead8d3"/><path d="M10 4.6 C9.4 9 9.3 15 9.8 20 L11.6 19.4 C11.5 14 11.7 9 11.9 5 Z" fill="#a3736d"/><path d="M12.2 5 C12.5 4 13.6 3.4 14.6 3.6 L14.4 19 L12.2 19.3 Z" fill="#efefef"/><path d="M14.6 4.8 L16.2 4.4 L16.2 18.6 L14.4 19 Z" fill="#cf9a9a"/><path d="M15 14 L15.9 14 L15.9 17.2 L15 17.2 Z" fill="#a85a5a"/><path d="M16.2 3.6 C17.6 3.4 18.7 4.4 19 5.6 L19 18.4 L16.2 18.6 Z" fill="#e9e9e9"/></g><rect x="2.3" y="26" width="12.8" height="1.8" rx="0.9" fill="#d9d9d9"/><rect x="17.2" y="26" width="4.9" height="1.8" rx="0.9" fill="#d9d9d9"/></svg>
<span class="t " style="left:38.00px;top:97.60px;line-height:15px;height:15px;font-size:10.39px;color:#222">Product Name</span>
<span class="t " style="left:38.00px;top:111.60px;line-height:14px;height:14px;font-size:9.00px;color:#666">ID:17284678980283976</span>
<span class="t " style="left:-44.72px;width:300px;text-align:right;top:103.60px;line-height:15px;height:15px;font-size:10.45px;letter-spacing:0.682px;color:#222">999</span>
<span class="t " style="left:61.38px;width:300px;text-align:right;top:103.60px;line-height:15px;height:15px;font-size:10.45px;letter-spacing:0.682px;color:#222">999</span>
<span class="t " style="left:167.08px;width:300px;text-align:right;top:103.60px;line-height:15px;height:15px;font-size:10.45px;letter-spacing:0.682px;color:#222">999</span>
<span class="t " style="left:287.90px;width:300px;text-align:right;top:103.60px;line-height:15px;height:15px;font-size:10.45px;color:#222">12.02%</span>
<div class="hl" style="left:7.80px;top:135.44px;width:731.00px;height:1.00px;"></div>
<svg style="left:8.00px;top:145.24px" width="24" height="30" viewBox="0 0 24 30"><rect x="0.5" y="0.5" width="23" height="29" rx="2.5" fill="#fff" stroke="#e2e2e2"/><path d="M0.3 3 Q0.3 0.3 3 0.3 H21 Q23.7 0.3 23.7 3 V24 H0.3 Z" fill="url(#tg)"/><g filter="url(#tb)"><path d="M7.3 4.3 C5.3 8 4.8 17 5.6 22 L7.6 22 C6.9 16 7.2 9 8.6 4.6 Z" fill="#5e2a25"/><path d="M8.6 4.6 C7.2 9 6.9 16 7.6 22 L9.6 21.4 C9.1 16 9.3 9 10 4.8 Z" fill="#ead8d3"/><path d="M10 4.6 C9.4 9 9.3 15 9.8 20 L11.6 19.4 C11.5 14 11.7 9 11.9 5 Z" fill="#a3736d"/><path d="M12.2 5 C12.5 4 13.6 3.4 14.6 3.6 L14.4 19 L12.2 19.3 Z" fill="#efefef"/><path d="M14.6 4.8 L16.2 4.4 L16.2 18.6 L14.4 19 Z" fill="#cf9a9a"/><path d="M15 14 L15.9 14 L15.9 17.2 L15 17.2 Z" fill="#a85a5a"/><path d="M16.2 3.6 C17.6 3.4 18.7 4.4 19 5.6 L19 18.4 L16.2 18.6 Z" fill="#e9e9e9"/></g><rect x="2.3" y="26" width="12.8" height="1.8" rx="0.9" fill="#d9d9d9"/><rect x="17.2" y="26" width="4.9" height="1.8" rx="0.9" fill="#d9d9d9"/></svg>
<span class="t " style="left:38.00px;top:145.60px;line-height:15px;height:15px;font-size:10.39px;color:#222">Product Name</span>
<span class="t " style="left:38.00px;top:160.60px;line-height:14px;height:14px;font-size:9.00px;color:#666">ID:17284678980283976</span>
<span class="t " style="left:-44.72px;width:300px;text-align:right;top:151.60px;line-height:15px;height:15px;font-size:10.45px;letter-spacing:0.682px;color:#222">999</span>
<span class="t " style="left:61.38px;width:300px;text-align:right;top:151.60px;line-height:15px;height:15px;font-size:10.45px;letter-spacing:0.682px;color:#222">999</span>
<span class="t " style="left:167.08px;width:300px;text-align:right;top:151.60px;line-height:15px;height:15px;font-size:10.45px;letter-spacing:0.682px;color:#222">999</span>
<span class="t " style="left:287.90px;width:300px;text-align:right;top:151.60px;line-height:15px;height:15px;font-size:10.45px;color:#222">12.02%</span>
<div class="hl" style="left:7.80px;top:183.91px;width:731.00px;height:1.00px;"></div>
<svg style="left:8.00px;top:193.71px" width="24" height="30" viewBox="0 0 24 30"><rect x="0.5" y="0.5" width="23" height="29" rx="2.5" fill="#fff" stroke="#e2e2e2"/><path d="M0.3 3 Q0.3 0.3 3 0.3 H21 Q23.7 0.3 23.7 3 V24 H0.3 Z" fill="url(#tg)"/><g filter="url(#tb)"><path d="M7.3 4.3 C5.3 8 4.8 17 5.6 22 L7.6 22 C6.9 16 7.2 9 8.6 4.6 Z" fill="#5e2a25"/><path d="M8.6 4.6 C7.2 9 6.9 16 7.6 22 L9.6 21.4 C9.1 16 9.3 9 10 4.8 Z" fill="#ead8d3"/><path d="M10 4.6 C9.4 9 9.3 15 9.8 20 L11.6 19.4 C11.5 14 11.7 9 11.9 5 Z" fill="#a3736d"/><path d="M12.2 5 C12.5 4 13.6 3.4 14.6 3.6 L14.4 19 L12.2 19.3 Z" fill="#efefef"/><path d="M14.6 4.8 L16.2 4.4 L16.2 18.6 L14.4 19 Z" fill="#cf9a9a"/><path d="M15 14 L15.9 14 L15.9 17.2 L15 17.2 Z" fill="#a85a5a"/><path d="M16.2 3.6 C17.6 3.4 18.7 4.4 19 5.6 L19 18.4 L16.2 18.6 Z" fill="#e9e9e9"/></g><rect x="2.3" y="26" width="12.8" height="1.8" rx="0.9" fill="#d9d9d9"/><rect x="17.2" y="26" width="4.9" height="1.8" rx="0.9" fill="#d9d9d9"/></svg>
<span class="t " style="left:38.00px;top:194.60px;line-height:15px;height:15px;font-size:10.39px;color:#222">Product Name</span>
<span class="t " style="left:38.00px;top:208.60px;line-height:14px;height:14px;font-size:9.00px;color:#666">ID:17284678980283976</span>
<span class="t " style="left:-44.72px;width:300px;text-align:right;top:200.60px;line-height:15px;height:15px;font-size:10.45px;letter-spacing:0.682px;color:#222">999</span>
<span class="t " style="left:61.38px;width:300px;text-align:right;top:200.60px;line-height:15px;height:15px;font-size:10.45px;letter-spacing:0.682px;color:#222">999</span>
<span class="t " style="left:167.08px;width:300px;text-align:right;top:200.60px;line-height:15px;height:15px;font-size:10.45px;letter-spacing:0.682px;color:#222">999</span>
<span class="t " style="left:287.90px;width:300px;text-align:right;top:200.60px;line-height:15px;height:15px;font-size:10.45px;color:#222">12.02%</span>
<div class="hl" style="left:7.80px;top:232.38px;width:731.00px;height:1.00px;"></div>
<svg style="left:8.00px;top:242.18px" width="24" height="30" viewBox="0 0 24 30"><rect x="0.5" y="0.5" width="23" height="29" rx="2.5" fill="#fff" stroke="#e2e2e2"/><path d="M0.3 3 Q0.3 0.3 3 0.3 H21 Q23.7 0.3 23.7 3 V24 H0.3 Z" fill="url(#tg)"/><g filter="url(#tb)"><path d="M7.3 4.3 C5.3 8 4.8 17 5.6 22 L7.6 22 C6.9 16 7.2 9 8.6 4.6 Z" fill="#5e2a25"/><path d="M8.6 4.6 C7.2 9 6.9 16 7.6 22 L9.6 21.4 C9.1 16 9.3 9 10 4.8 Z" fill="#ead8d3"/><path d="M10 4.6 C9.4 9 9.3 15 9.8 20 L11.6 19.4 C11.5 14 11.7 9 11.9 5 Z" fill="#a3736d"/><path d="M12.2 5 C12.5 4 13.6 3.4 14.6 3.6 L14.4 19 L12.2 19.3 Z" fill="#efefef"/><path d="M14.6 4.8 L16.2 4.4 L16.2 18.6 L14.4 19 Z" fill="#cf9a9a"/><path d="M15 14 L15.9 14 L15.9 17.2 L15 17.2 Z" fill="#a85a5a"/><path d="M16.2 3.6 C17.6 3.4 18.7 4.4 19 5.6 L19 18.4 L16.2 18.6 Z" fill="#e9e9e9"/></g><rect x="2.3" y="26" width="12.8" height="1.8" rx="0.9" fill="#d9d9d9"/><rect x="17.2" y="26" width="4.9" height="1.8" rx="0.9" fill="#d9d9d9"/></svg>
<span class="t " style="left:38.00px;top:242.60px;line-height:15px;height:15px;font-size:10.39px;color:#222">Product Name</span>
<span class="t " style="left:38.00px;top:257.60px;line-height:14px;height:14px;font-size:9.00px;color:#666">ID:17284678980283976</span>
<span class="t " style="left:-44.72px;width:300px;text-align:right;top:248.60px;line-height:15px;height:15px;font-size:10.45px;letter-spacing:0.682px;color:#222">999</span>
<span class="t " style="left:61.38px;width:300px;text-align:right;top:248.60px;line-height:15px;height:15px;font-size:10.45px;letter-spacing:0.682px;color:#222">999</span>
<span class="t " style="left:167.08px;width:300px;text-align:right;top:248.60px;line-height:15px;height:15px;font-size:10.45px;letter-spacing:0.682px;color:#222">999</span>
<span class="t " style="left:287.90px;width:300px;text-align:right;top:248.60px;line-height:15px;height:15px;font-size:10.45px;color:#222">12.02%</span>
<div class="hl" style="left:7.80px;top:280.85px;width:731.00px;height:1.00px;"></div>
<svg style="left:8.00px;top:290.65px" width="24" height="30" viewBox="0 0 24 30"><rect x="0.5" y="0.5" width="23" height="29" rx="2.5" fill="#fff" stroke="#e2e2e2"/><path d="M0.3 3 Q0.3 0.3 3 0.3 H21 Q23.7 0.3 23.7 3 V24 H0.3 Z" fill="url(#tg)"/><g filter="url(#tb)"><path d="M7.3 4.3 C5.3 8 4.8 17 5.6 22 L7.6 22 C6.9 16 7.2 9 8.6 4.6 Z" fill="#5e2a25"/><path d="M8.6 4.6 C7.2 9 6.9 16 7.6 22 L9.6 21.4 C9.1 16 9.3 9 10 4.8 Z" fill="#ead8d3"/><path d="M10 4.6 C9.4 9 9.3 15 9.8 20 L11.6 19.4 C11.5 14 11.7 9 11.9 5 Z" fill="#a3736d"/><path d="M12.2 5 C12.5 4 13.6 3.4 14.6 3.6 L14.4 19 L12.2 19.3 Z" fill="#efefef"/><path d="M14.6 4.8 L16.2 4.4 L16.2 18.6 L14.4 19 Z" fill="#cf9a9a"/><path d="M15 14 L15.9 14 L15.9 17.2 L15 17.2 Z" fill="#a85a5a"/><path d="M16.2 3.6 C17.6 3.4 18.7 4.4 19 5.6 L19 18.4 L16.2 18.6 Z" fill="#e9e9e9"/></g><rect x="2.3" y="26" width="12.8" height="1.8" rx="0.9" fill="#d9d9d9"/><rect x="17.2" y="26" width="4.9" height="1.8" rx="0.9" fill="#d9d9d9"/></svg>
<span class="t " style="left:38.00px;top:291.60px;line-height:15px;height:15px;font-size:10.39px;color:#222">Product Name</span>
<span class="t " style="left:38.00px;top:305.60px;line-height:14px;height:14px;font-size:9.00px;color:#666">ID:17284678980283976</span>
<span class="t " style="left:-44.72px;width:300px;text-align:right;top:296.60px;line-height:15px;height:15px;font-size:10.45px;letter-spacing:0.682px;color:#222">999</span>
<span class="t " style="left:61.38px;width:300px;text-align:right;top:296.60px;line-height:15px;height:15px;font-size:10.45px;letter-spacing:0.682px;color:#222">999</span>
<span class="t " style="left:167.08px;width:300px;text-align:right;top:296.60px;line-height:15px;height:15px;font-size:10.45px;letter-spacing:0.682px;color:#222">999</span>
<span class="t " style="left:287.90px;width:300px;text-align:right;top:296.60px;line-height:15px;height:15px;font-size:10.45px;color:#222">12.02%</span>
<div class="hl" style="left:7.80px;top:329.32px;width:731.00px;height:1.00px;"></div>
<svg style="left:8.00px;top:339.12px" width="24" height="30" viewBox="0 0 24 30"><rect x="0.5" y="0.5" width="23" height="29" rx="2.5" fill="#fff" stroke="#e2e2e2"/><path d="M0.3 3 Q0.3 0.3 3 0.3 H21 Q23.7 0.3 23.7 3 V24 H0.3 Z" fill="url(#tg)"/><g filter="url(#tb)"><path d="M7.3 4.3 C5.3 8 4.8 17 5.6 22 L7.6 22 C6.9 16 7.2 9 8.6 4.6 Z" fill="#5e2a25"/><path d="M8.6 4.6 C7.2 9 6.9 16 7.6 22 L9.6 21.4 C9.1 16 9.3 9 10 4.8 Z" fill="#ead8d3"/><path d="M10 4.6 C9.4 9 9.3 15 9.8 20 L11.6 19.4 C11.5 14 11.7 9 11.9 5 Z" fill="#a3736d"/><path d="M12.2 5 C12.5 4 13.6 3.4 14.6 3.6 L14.4 19 L12.2 19.3 Z" fill="#efefef"/><path d="M14.6 4.8 L16.2 4.4 L16.2 18.6 L14.4 19 Z" fill="#cf9a9a"/><path d="M15 14 L15.9 14 L15.9 17.2 L15 17.2 Z" fill="#a85a5a"/><path d="M16.2 3.6 C17.6 3.4 18.7 4.4 19 5.6 L19 18.4 L16.2 18.6 Z" fill="#e9e9e9"/></g><rect x="2.3" y="26" width="12.8" height="1.8" rx="0.9" fill="#d9d9d9"/><rect x="17.2" y="26" width="4.9" height="1.8" rx="0.9" fill="#d9d9d9"/></svg>
<span class="t " style="left:38.00px;top:339.60px;line-height:15px;height:15px;font-size:10.39px;color:#222">Product Name</span>
<span class="t " style="left:38.00px;top:354.60px;line-height:14px;height:14px;font-size:9.00px;color:#666">ID:17284678980283976</span>
<span class="t " style="left:-44.72px;width:300px;text-align:right;top:345.60px;line-height:15px;height:15px;font-size:10.45px;letter-spacing:0.682px;color:#222">999</span>
<span class="t " style="left:61.38px;width:300px;text-align:right;top:345.60px;line-height:15px;height:15px;font-size:10.45px;letter-spacing:0.682px;color:#222">999</span>
<span class="t " style="left:167.08px;width:300px;text-align:right;top:345.60px;line-height:15px;height:15px;font-size:10.45px;letter-spacing:0.682px;color:#222">999</span>
<span class="t " style="left:287.90px;width:300px;text-align:right;top:345.60px;line-height:15px;height:15px;font-size:10.45px;color:#222">12.02%</span>
<div class="hl" style="left:7.80px;top:377.79px;width:731.00px;height:1.00px;"></div>
<div class="abs" style="left:634.20px;top:0.00px;width:113.20px;height:400.00px;background:#fff;box-shadow:-3px 0 5px rgba(0,0,0,.045)">
<div class="abs" style="left:0.00px;top:0.00px;width:113.20px;height:39.00px;background:#f5f5f5"></div>
<span class="t sb1" style="left:9.60px;top:11.60px;line-height:14px;height:14px;font-size:9.32px;color:#4a4a4a">Action</span>
<span class="t sbl teal" style="left:9.60px;top:54.60px;line-height:15px;height:15px;font-size:10.10px;letter-spacing:0.249px;">Product card detail</span>
<div class="hl" style="left:0.00px;top:86.97px;width:104.60px;height:1.00px;"></div>
<span class="t sbl teal" style="left:9.60px;top:102.60px;line-height:15px;height:15px;font-size:10.10px;letter-spacing:0.249px;">Product card detail</span>
<div class="hl" style="left:0.00px;top:135.44px;width:104.60px;height:1.00px;"></div>
<span class="t sbl teal" style="left:9.60px;top:151.60px;line-height:15px;height:15px;font-size:10.10px;letter-spacing:0.249px;">Product card detail</span>
<div class="hl" style="left:0.00px;top:183.91px;width:104.60px;height:1.00px;"></div>
<span class="t sbl teal" style="left:9.60px;top:199.60px;line-height:15px;height:15px;font-size:10.10px;letter-spacing:0.249px;">Product card detail</span>
<div class="hl" style="left:0.00px;top:232.38px;width:104.60px;height:1.00px;"></div>
<span class="t sbl teal" style="left:9.60px;top:248.60px;line-height:15px;height:15px;font-size:10.10px;letter-spacing:0.249px;">Product card detail</span>
<div class="hl" style="left:0.00px;top:280.85px;width:104.60px;height:1.00px;"></div>
<span class="t sbl teal" style="left:9.60px;top:296.60px;line-height:15px;height:15px;font-size:10.10px;letter-spacing:0.249px;">Product card detail</span>
<div class="hl" style="left:0.00px;top:329.32px;width:104.60px;height:1.00px;"></div>
<span class="t sbl teal" style="left:9.60px;top:345.60px;line-height:15px;height:15px;font-size:10.10px;letter-spacing:0.249px;">Product card detail</span>
<div class="hl" style="left:0.00px;top:377.79px;width:104.60px;height:1.00px;"></div>
</div>
</div>
</section>
<div class="abs" style="left:233.00px;top:642.00px;width:781.00px;height:437.00px;border:6px solid #30c422;border-radius:10px"></div>
</div>
</body></html>
